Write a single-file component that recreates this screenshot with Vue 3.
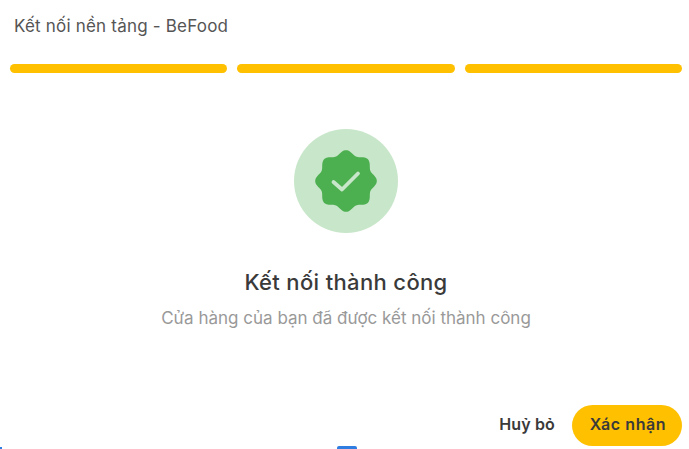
<script setup>
const n = 8
const pts = []
for (let i = 0; i < 180; i++) {
  const t = (i / 180) * Math.PI * 2
  const r = 28.6 + 2.2 * Math.cos(n * t)
  pts.push((32 + r * Math.sin(t)).toFixed(2) + ' ' + (32 - r * Math.cos(t)).toFixed(2))
}
const badge = 'M' + pts.join('L') + 'Z'
const steps = [1, 2, 3]
</script>

<template>
  <div class="dialog">
    <header class="title">Kết nối nền tảng - BeFood</header>
    <div class="steps">
      <span v-for="s in steps" :key="s" class="step"></span>
    </div>
    <main class="body">
      <div class="circle">
        <svg class="badge" width="64" height="64" viewBox="0 0 64 64">
          <path :d="badge" fill="#4caf50" />
          <path d="M19.5 33l8.5 7.5L44 24.5" fill="none" stroke="#c8e6c9" stroke-width="3.8" stroke-linecap="round" stroke-linejoin="round" />
        </svg>
      </div>
      <h2 class="heading">Kết nối thành công</h2>
      <p class="sub">Cửa hàng của bạn đã được kết nối thành công</p>
    </main>
    <footer class="actions">
      <button class="btn cancel">Huỷ bỏ</button>
      <button class="btn ok">Xác nhận</button>
    </footer>
    <span class="peek peek-a"></span>
    <span class="peek peek-b"></span>
  </div>
</template>

<style>
html, body { margin: 0; background: #fff; overflow: hidden; }
</style>

<style scoped>
.dialog {
  position: relative;
  width: 689px;
  height: 449px;
  overflow: hidden;
  display: flex;
  flex-direction: column;
  background: #fff;
  font-family: Inter, "Noto Sans", sans-serif;
  box-sizing: border-box;
}
.title {
  padding: 15px 14px 0;
  height: 47px;
  box-sizing: border-box;
  font-size: 17px;
  letter-spacing: 0.2px;
  line-height: 22px;
  color: #555;
}
.steps {
  display: flex;
  gap: 10px;
  padding: 0 7px 0 10px;
  margin-top: 17px;
}
.step {
  flex: 1;
  height: 8.5px;
  border-radius: 5px;
  background: #ffc000;
}
.body {
  flex: 1;
  display: flex;
  flex-direction: column;
  align-items: center;
  padding-top: 56.5px;
  padding-left: 3px;
}
.circle {
  width: 104px;
  height: 104px;
  border-radius: 50%;
  background: #c8e6c9;
  display: flex;
  align-items: center;
  justify-content: center;
}
.heading {
  margin: 35px 0 0;
  font-size: 22px;
  letter-spacing: 0.35px;
  line-height: 28px;
  font-weight: 500;
  color: #3a3a3a;
}
.sub {
  margin: 11px 0 0;
  font-size: 17px;
  line-height: 22px;
  color: #999;
}
.actions {
  display: flex;
  align-items: center;
  justify-content: flex-end;
  gap: 17px;
  padding: 0 7px 3px 0;
}
.btn {
  border: 0;
  background: none;
  font-family: inherit;
  font-size: 16px;
  font-weight: 600;
  color: #3a3a3a;
  padding: 0 0 3px;
  height: 41px;
  box-sizing: border-box;
}
.cancel {
  letter-spacing: 0.15px;
}
.ok {
  width: 110px;
  padding-left: 2px;
  border-radius: 21px;
  background: #ffc000;
  letter-spacing: 0.6px;
}
.peek {
  position: absolute;
  bottom: 0;
  height: 2px;
  background: #2f7de1;
}
.peek-a { left: 0; width: 2px; }
.peek-b { left: 337px; width: 20px; height: 3px; border-radius: 2px 2px 0 0; }
</style>
